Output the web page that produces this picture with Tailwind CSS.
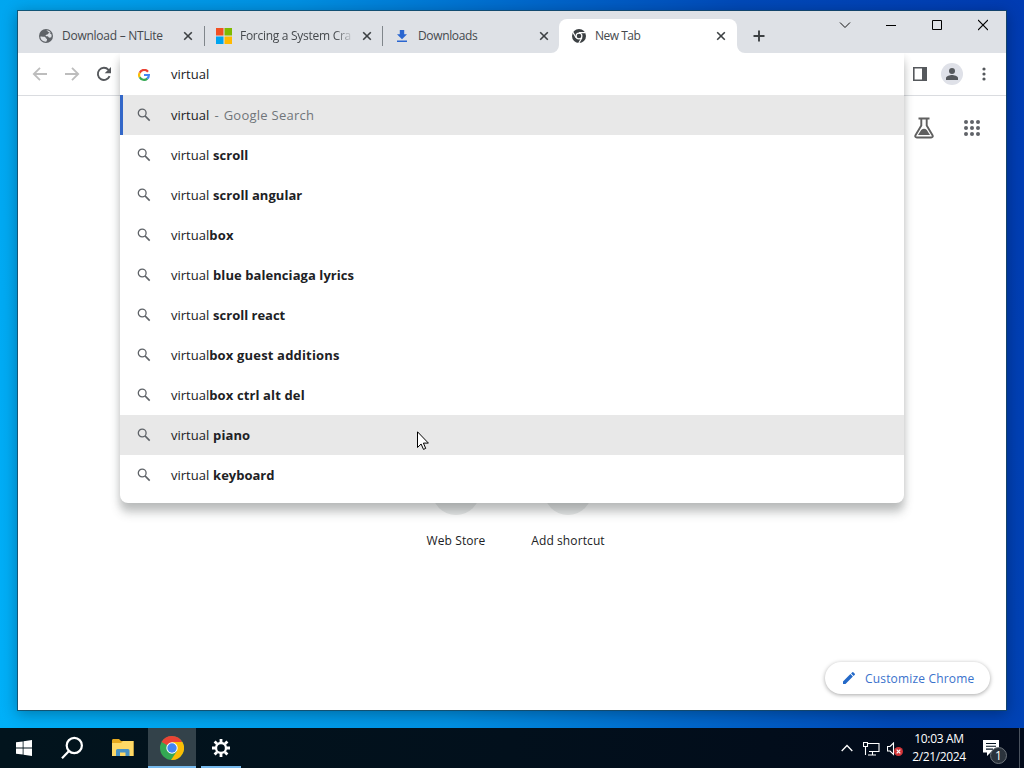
<!DOCTYPE html>
<html lang="en">
  <head>
    <meta charset="UTF-8" />
    <meta name="viewport" content="width=device-width, initial-scale=1.0" />
    <title>New Tab</title>
    <script src="https://cdn.jsdelivr.net/npm/@tailwindcss/browser@4"></script>
  </head>
  <body class="w-[1024px] h-[768px] overflow-hidden flex flex-col font-['Open_Sans','Noto_Sans',sans-serif] text-[13px] text-[#202124]">

    <!-- Shared icons -->
    <svg class="hidden">
      <symbol id="search" viewBox="0 0 16 16"><g fill="none" stroke="#5f6368" stroke-width="1.3"><circle cx="6.2" cy="6" r="3.9" /><path d="M9 8.9l4.700 4.700" stroke-width="1.6" /></g></symbol>
      <symbol id="close" viewBox="0 0 10 10"><path d="M1.2 1.2l7.6 7.6M8.8 1.2L1.2 8.8" fill="none" stroke="#3c4043" stroke-width="1.6" /></symbol>
    </svg>

    <!-- Desktop -->
    <div class="h-[728px] shrink-0 pt-2.5 pl-[17px] bg-[linear-gradient(78deg,#00b0f8_0%,#00a4ee_16%,#0090e2_38%,#0068cc_58%,#0049b8_76%,#003bb2_100%)]">

      <!-- Browser window -->
      <div class="relative w-[990px] h-[701px] border border-[#16465f]/80 bg-white bg-clip-padding flex flex-col shadow-[0_3px_14px_rgba(0,0,0,0.3)]">

        <!-- Tab strip -->
        <div class="h-[42px] shrink-0 pl-2 flex items-end bg-[#dee1e6]">
          <div class="w-[178px] h-[34px] pl-3 pr-[11px] flex items-center">
            <svg class="size-4 shrink-0" viewBox="0 0 16 16"><circle cx="8" cy="8" r="7" fill="#5f6368" /><path d="M2.3 8.600c1.800-.4 3 .3 4.400.2 1.200.4.800 1.600 1.800 2 .9.2.6 1.600-.3 2.900-3.200.2-5.800-2-5.900-5.100zM8.300 2.300c1.500 0 3.400.7 4.500 2.200-.8.5-1.600.1-2.300.7-.2.8-.9 1.300-2 1.500-1.200.3-1.100 1.300-.2 1.600 1.200-.2 2.200.2 2.500 1.200.7.3 1.700.1 2.500-.2.300-.9.500-1.900.2-2.700" fill="#dee1e6" /></svg>
            <span class="ml-2 w-[119px] text-[12px] tracking-[-0.25px] text-[#45494d] whitespace-nowrap overflow-hidden">Download – NTLite</span>
            <svg class="size-2.5 shrink-0 ml-1"><use href="#close" /></svg>
          </div>
          <div class="relative w-[178px] h-[34px] pl-3 pr-2.5 flex items-center">
            <span class="absolute left-0 top-[7px] w-px h-5 bg-[#80868b]"></span>
            <svg class="size-4 shrink-0" viewBox="0 0 16 16"><path d="M0 0h7.500v7.500H0z" fill="#f25022" /><path d="M8.500 0H16v7.500H8.500z" fill="#7fba00" /><path d="M0 8.500h7.500V16H0z" fill="#00a4ef" /><path d="M8.500 8.500H16V16H8.500z" fill="#ffb900" /></svg>
            <span class="ml-2 w-[119px] text-[12px] tracking-[-0.28px] text-[#45494d] whitespace-nowrap overflow-hidden mask-[linear-gradient(90deg,#000_80%,transparent_97%)]">Forcing a System Cra</span>
            <svg class="size-2.5 shrink-0 ml-1"><use href="#close" /></svg>
          </div>
          <div class="relative w-[177px] h-[34px] pl-3 pr-2.5 flex items-center">
            <span class="absolute left-0 top-[7px] w-px h-5 bg-[#80868b]"></span>
            <svg class="size-4 shrink-0" viewBox="0 0 16 16"><path d="M5.800 2h4.400v4.200h2.800L8 11.200l-5-5h2.800zM3 12.400h10V14H3z" fill="#2a66d0" /></svg>
            <span class="ml-2 w-[119px] text-[12px] tracking-[-0.35px] text-[#45494d] whitespace-nowrap overflow-hidden">Downloads</span>
            <svg class="size-2.5 shrink-0 ml-1"><use href="#close" /></svg>
          </div>
          <div class="relative w-[178px] h-[34px] pl-3 pr-[11px] flex items-center rounded-t-lg bg-white">
            <svg class="absolute -left-2 bottom-0 size-2" viewBox="0 0 8 8"><path d="M8 0v8H0a8 8 0 0 0 8-8z" fill="#fff" /></svg>
            <svg class="absolute -right-2 bottom-0 size-2" viewBox="0 0 8 8"><path d="M0 0v8h8a8 8 0 0 1-8-8z" fill="#fff" /></svg>
            <svg class="size-4 shrink-0" viewBox="0 0 16 16"><circle cx="8" cy="8" r="7" fill="#3c4043" /><circle cx="8" cy="8" r="2.900" fill="none" stroke="#fff" stroke-width="1.200" /><path d="M8 4.700h6.500M5.100 9.700L1.900 4.200M10.900 9.700l-3.200 5.600" fill="none" stroke="#fff" stroke-width="1.200" /></svg>
            <span class="ml-2 w-[118px] text-[12px] tracking-[-0.5px] text-[#45494d] whitespace-nowrap overflow-hidden">New Tab</span>
            <svg class="size-2.5 shrink-0 ml-1"><use href="#close" /></svg>
          </div>
          <svg class="size-3 ml-4 mb-[11px]" viewBox="0 0 12 12"><path d="M6 .5v11M.5 6h11" stroke="#3c4043" stroke-width="1.900" /></svg>
          <div class="ml-auto mr-[18px] self-start mt-2 h-3 flex items-center gap-9">
            <svg class="w-3 h-3 -mr-px" viewBox="0 0 12 12"><path d="M1 3.500l5 5 5-5" fill="none" stroke="#111" /></svg>
            <svg class="w-2.5 h-3" viewBox="0 0 10 12"><path d="M0 6.500h10" stroke="#000" /></svg>
            <svg class="w-2.5 h-3" viewBox="0 0 10 12"><path d="M.5 1.500h9v9h-9z" fill="none" stroke="#000" /></svg>
            <svg class="w-2.5 h-3" viewBox="0 0 10 12"><path d="M0 1l10 10M10 1L0 11" stroke="#000" stroke-width="1.100" /></svg>
          </div>
        </div>

        <!-- Toolbar -->
        <div class="h-[43px] shrink-0 pl-[14px] pr-5 flex items-center gap-4 border-b border-[#dadce0] bg-white">
          <svg class="size-4" viewBox="0 0 16 16"><path d="M15 8H2.200M8 1.800L1.800 8 8 14.200" fill="none" stroke="#bdbdbd" stroke-width="1.800" /></svg>
          <svg class="size-4" viewBox="0 0 16 16"><path d="M1 8h12.800M8 1.800L14.200 8 8 14.200" fill="none" stroke="#bdbdbd" stroke-width="1.800" /></svg>
          <svg class="size-4" viewBox="0 0 16 16"><path d="M13.600 10.200A6.100 6.100 0 1 1 12.500 3.800l1.200 1.300" fill="none" stroke="#55585c" stroke-width="1.900" /><path d="M15 1v6.300H8.700z" fill="#55585c" /></svg>
          <div class="ml-auto flex items-center">
            <svg class="w-[14px] h-[14px]" viewBox="0 0 14 14"><path d="M.8.800h12.400v12.400H.8z" fill="none" stroke="#55585c" stroke-width="1.600" /><path d="M9 1h4v12H9z" fill="#55585c" /></svg>
            <svg class="size-[22px] ml-3.5" viewBox="0 0 22 22"><circle cx="11" cy="11" r="11" fill="#dfe1e8" /><circle cx="11" cy="8" r="3" fill="#55585c" /><path d="M5 17v-2c0-2 4-3 6-3s6 1 6 3v2z" fill="#55585c" /></svg>
            <svg class="w-1 h-3.5 ml-[19px]" viewBox="0 0 4 14"><g fill="#55585c"><circle cx="2" cy="2" r="1.600" /><circle cx="2" cy="7" r="1.600" /><circle cx="2" cy="12" r="1.600" /></g></svg>
          </div>
        </div>

        <!-- New tab page -->
        <div class="flex-1 flex flex-col bg-white">
          <div class="pt-[21px] pr-[26px] flex justify-end items-center gap-[30px]">
            <svg class="w-5 h-[22px]" viewBox="0 0 20 22"><path d="M4.500 1.500h11M7.300 2v6.500L1.500 18.200c-.7 1.300 0 2.300 1.300 2.300h14.400c1.300 0 2-1 1.300-2.300L12.700 8.500V2" fill="none" stroke="#606060" stroke-width="1.900" /><path d="M4 18l3.200-5c1.800-1.700 4-1.700 5.600 0L16 18z" fill="#606060" /></svg>
            <svg class="size-4" viewBox="0 0 16 16"><g fill="#606368"><circle cx="2" cy="2" r="2" /><circle cx="8" cy="2" r="2" /><circle cx="14" cy="2" r="2" /><circle cx="2" cy="8" r="2" /><circle cx="8" cy="8" r="2" /><circle cx="14" cy="8" r="2" /><circle cx="2" cy="14" r="2" /><circle cx="8" cy="14" r="2" /><circle cx="14" cy="14" r="2" /></g></svg>
          </div>
          <div class="mt-[328px] pl-[382px] flex text-[12px] text-center tracking-[0.1px]">
            <div class="w-28 flex flex-col items-center gap-[17px]">
              <span class="size-12 rounded-full bg-[#e8eaea]"></span>
              <span>Web Store</span>
            </div>
            <div class="w-28 flex flex-col items-center gap-[17px]">
              <span class="size-12 rounded-full bg-[#e8eaea]"></span>
              <span>Add shortcut</span>
            </div>
          </div>
          <button class="mt-auto mb-4 mr-4 ml-auto w-[165px] h-8 pl-4 flex items-center gap-2 rounded-full bg-white text-[12px] tracking-[0.17px] text-[#3a72cc] whitespace-nowrap shadow-[0_1px_4px_rgba(0,0,0,0.35)]">
            <svg class="size-4" viewBox="0 0 16 16"><path d="M2 11.500V14h2.500l7.400-7.400-2.500-2.500zM13.800 4.700a.7.7 0 0 0 0-1l-1.500-1.500a.7.7 0 0 0-1 0l-1.200 1.200 2.500 2.500z" fill="#2469c8" /></svg>
            <span class="pt-0.5">Customize Chrome</span>
          </button>
        </div>

        <!-- Omnibox popup, the shadow is clipped along the tab strip -->
        <div class="absolute left-[102px] top-[42px] w-[784px] h-[450px] pt-px rounded-b-lg bg-white [clip-path:inset(0_-20px_-40px_-20px)] shadow-[0_10px_10px_rgba(60,70,70,0.26),0_4px_8px_rgba(0,0,0,0.12)]">
          <div class="h-[41px] flex items-center">
            <svg class="size-3 ml-[18px]" viewBox="0 0 12 12"><g fill="none" stroke-width="2.200"><path d="M10 2.700A4.900 4.900 0 0 0 1.700 3.800" stroke="#ea4335" /><path d="M1.700 3.700a4.900 4.900 0 0 0 0 4.600" stroke="#fbbc05" /><path d="M1.700 8.200A4.900 4.900 0 0 0 9.300 9.600" stroke="#34a853" /><path d="M9.200 9.700A4.900 4.900 0 0 0 10.900 6H6" stroke="#4285f4" /></g></svg>
            <span class="ml-[21px]">virtual</span>
          </div>
          <div class="h-10 border-l-[3px] border-[#3367c8] bg-[#e8e8e8] flex items-center"><svg class="size-4 ml-[13px] mr-[19px]"><use href="#search" /></svg><p class="pt-0.5">virtual <span class="ml-0.5 tracking-[0.25px] text-[#70757a]">- <span class="ml-px">Google Search</span></span></p></div>
          <div class="h-10 flex items-center"><svg class="size-4 ml-4 mr-[19px]"><use href="#search" /></svg><p class="pt-0.5">virtual <b class="ml-[0.5px]">scroll</b></p></div>
          <div class="h-10 flex items-center"><svg class="size-4 ml-4 mr-[19px]"><use href="#search" /></svg><p class="pt-0.5">virtual <b class="ml-[0.5px] tracking-[0.06px]">scroll angular</b></p></div>
          <div class="h-10 flex items-center"><svg class="size-4 ml-4 mr-[19px]"><use href="#search" /></svg><p class="pt-0.5">virtual<b class="tracking-[0.2px]">box</b></p></div>
          <div class="h-10 flex items-center"><svg class="size-4 ml-4 mr-[19px]"><use href="#search" /></svg><p class="pt-0.5">virtual <b class="ml-[0.5px] tracking-[0.07px]">blue balenciaga lyrics</b></p></div>
          <div class="h-10 flex items-center"><svg class="size-4 ml-4 mr-[19px]"><use href="#search" /></svg><p class="pt-0.5">virtual <b class="ml-[0.5px]">scroll react</b></p></div>
          <div class="h-10 flex items-center"><svg class="size-4 ml-4 mr-[19px]"><use href="#search" /></svg><p class="pt-0.5">virtual<b class="tracking-[0.17px]">box guest additions</b></p></div>
          <div class="h-10 flex items-center"><svg class="size-4 ml-4 mr-[19px]"><use href="#search" /></svg><p class="pt-0.5">virtual<b class="tracking-[0.13px]">box ctrl alt del</b></p></div>
          <div class="h-10 bg-[#e8e8e8] flex items-center"><svg class="size-4 ml-4 mr-[19px]"><use href="#search" /></svg><p class="pt-0.5">virtual <b class="ml-[0.5px] tracking-[0.1px]">piano</b></p></div>
          <div class="h-10 flex items-center"><svg class="size-4 ml-4 mr-[19px]"><use href="#search" /></svg><p class="pt-0.5">virtual <b class="ml-[0.5px]">keyboard</b></p></div>
        </div>

        <!-- Mouse pointer -->
        <svg class="absolute left-[399px] top-[420px] w-3 h-[19px]" viewBox="0 0 12 19"><path d="M.5.800v15.700l3.600-3.500 2.400 5.400 2.200-1-2.300-5.300h5z" fill="#fff" stroke="#000" /></svg>
      </div>
    </div>

    <!-- Taskbar -->
    <div class="h-10 shrink-0 bg-[linear-gradient(90deg,#02141d,#02101c_50%,#020a1a)] flex items-center text-white">
      <svg class="size-4 ml-4" viewBox="0 0 16 16"><path d="M0 2.300l6.700-.9v6.200H0zM7.500 1.300L16 .1v7.500H7.500zM0 8.400h6.700v6.200L0 13.700zM7.500 8.400H16v7.500l-8.500-1.200z" fill="#fff" /></svg>
      <svg class="w-6 h-6 ml-7" viewBox="0 0 24 24"><g fill="none" stroke="#fff" stroke-width="2.200"><circle cx="14.300" cy="9.500" r="7.600" /><path d="M9 15l-7 7.200" /></g></svg>
      <svg class="w-[22px] h-5 ml-7" viewBox="0 0 22 20"><path d="M0 2.500Q0 1 1 1h6l2 2h12.500v15H0z" fill="#e6a91f" /><path d="M0 5h9l2-2h10.500v15H0z" fill="#ffd966" /><path d="M4 18v-5.500Q4 11 5.500 11h10.500q1.500 0 1.500 1.500V18h-4v-3.500h-5.500V18z" fill="#4a93c4" /></svg>
      <div class="w-12 h-10 ml-[14px] pt-px bg-[#33424a] border-b-2 border-[#76b9ed] flex items-center justify-center">
        <svg class="size-6" viewBox="0 0 24 24"><circle cx="12" cy="12" r="12" fill="#34a853" /><path d="M12 12L1.600 6A12 12 0 0 1 22.400 6.200H12z" fill="#ea4335" /><path d="M22.400 6A12 12 0 0 1 12 24l-1-.1L17 15 12 6z" fill="#fbbc05" /><circle cx="12" cy="12" r="5.700" fill="#fff" /><circle cx="12" cy="12" r="4.700" fill="#4285f4" /></svg>
      </div>
      <div class="w-10 h-10 ml-[5px] pt-px border-b-2 border-[#76b9ed] flex items-center justify-center">
        <svg class="size-[18px]" viewBox="0 0 18 18"><circle cx="9" cy="9" r="5" fill="none" stroke="#fff" stroke-width="2.300" /><path d="M9 0v3.500M9 14.500V18M0 9h3.500M14.500 9H18M2.600 2.600l2.500 2.500M12.900 12.900l2.500 2.500M15.400 2.600l-2.500 2.500M5.100 12.900l-2.500 2.500" stroke="#fff" stroke-width="2.800" /></svg>
      </div>
      <div class="ml-auto flex items-center">
        <svg class="w-3 h-2" viewBox="0 0 12 8"><path d="M.7 7L6 1.500 11.300 7" fill="none" stroke="#fff" stroke-width="1.300" /></svg>
        <svg class="w-[17px] h-[14px] ml-2.5 mt-px" viewBox="0 0 17 14"><path d="M4.500 1.500h11.500v8H6M.5.500h4v4h-4zM2.500 4.500v8.500M9.500 9.500V13M5 13h8" fill="none" stroke="#fff" stroke-width="1.100" /></svg>
        <svg class="w-4 h-[14px] ml-[7px] mt-px" viewBox="0 0 16 14"><path d="M.5 4.500h2.500l3.500-3.500v11.500L3 9H.5z" fill="none" stroke="#fff" stroke-width="1.100" /><circle cx="11.500" cy="9.500" r="4.500" fill="#d13438" /><path d="M9.700 7.700l3.600 3.600M13.300 7.700l-3.600 3.600" stroke="#fff" stroke-width="1.200" /></svg>
        <div class="w-[56px] ml-2 mr-4 text-[12px] leading-[18px] text-center whitespace-nowrap flex flex-col items-center tracking-[-0.35px]"><span>10:03 AM</span><span>2/21/2024</span></div>
        <div class="relative w-4 h-4 mr-5">
          <svg class="size-4" viewBox="0 0 16 16"><path d="M0 0h16v12.500H7.500L4 16v-3.500H0z" fill="#fff" /><path d="M3 3.500h10M3 6.300h10M3 9.100h7" stroke="#061522" stroke-width="1.100" /></svg>
          <span class="absolute left-[7px] top-[7px] size-[17px] rounded-full border border-[#6d747b] bg-[#2b333c] text-[12px] leading-[15px] text-center">1</span>
        </div>
        <span class="w-px h-10 mr-1 bg-[#4a525e]"></span>
      </div>
    </div>
  </body>
</html>
